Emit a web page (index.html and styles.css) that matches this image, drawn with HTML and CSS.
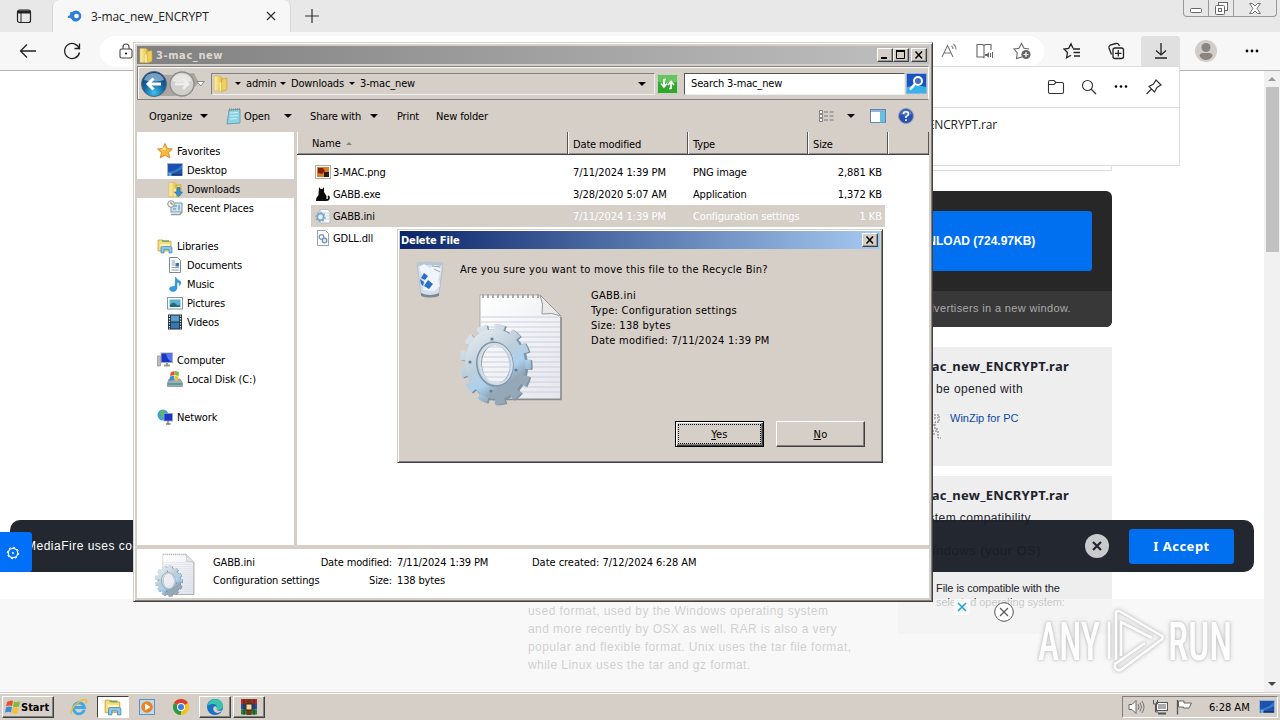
FILE: index.html
```html
<!DOCTYPE html>
<html lang="en">
<head>
    <meta charset="UTF-8">
    <title>3-mac_new_ENCRYPT</title>
    <link rel="stylesheet" href="styles.css">
</head>
<body>

<!-- Shared icons -->
<svg class="defs" width="0" height="0">
    <defs>
        <linearGradient id="gearFill" x1="0" y1="0" x2="0.4" y2="1">
            <stop offset="0" stop-color="#dfe6ec"/>
            <stop offset="0.5" stop-color="#bccedb"/>
            <stop offset="0.8" stop-color="#abd0ee"/>
            <stop offset="1" stop-color="#94a8b8"/>
        </linearGradient>
        <linearGradient id="paperFill" x1="0" y1="0" x2="1" y2="1">
            <stop offset="0" stop-color="#fff"/>
            <stop offset="1" stop-color="#e3e6ec"/>
        </linearGradient>
        <linearGradient id="folderFill" x1="0" y1="0" x2="1" y2="0">
            <stop offset="0" stop-color="#fdf3b0"/>
            <stop offset="1" stop-color="#e2b73c"/>
        </linearGradient>
        <radialGradient id="backFill" cx="0.5" cy="0.85" r="0.8">
            <stop offset="0" stop-color="#3fc3ee"/>
            <stop offset="0.5" stop-color="#1667a5"/>
            <stop offset="1" stop-color="#0c3f73"/>
        </radialGradient>
        <symbol id="ini" viewBox="0 0 104 114" overflow="visible">
            <path d="M20 3H80L101 24V107H20Z" fill="url(#paperFill)" stroke="#b0b0b0" stroke-width="1"/>
            <path d="M101 25V107.500H21" fill="none" stroke="#8a8a8a" stroke-width="1.500"/>
            <path d="M21 25H100M21 30H100M21 35H100M21 40H100M21 45H100M21 50H100M21 55H100M21 60H100M21 65H100M21 70H100M21 75H100M21 80H100M21 85H100M21 90H100M21 95H100M21 100H100" stroke="#ccd0dc" stroke-width="1"/>
            <path d="M22 4H80" stroke="#a9a9a9" stroke-width="4" stroke-dasharray="2 3"/>
            <path d="M80 3Q84 12 82 22Q92 20 101 24Z" fill="#e8e8e8" stroke="#999"/>
            <g transform="rotate(-8 36 73)">
                <ellipse cx="37" cy="73" rx="29" ry="34" fill="none" stroke="#7d92a5" stroke-width="13" pathLength="26" stroke-dasharray="1.15 0.85"/>
                <ellipse cx="37" cy="73" rx="23" ry="28" fill="none" stroke="#7d92a5" stroke-width="16"/>
                <ellipse cx="35.500" cy="72" rx="29" ry="34" fill="none" stroke="url(#gearFill)" stroke-width="13" pathLength="26" stroke-dasharray="1.15 0.85"/>
                <ellipse cx="35.500" cy="72" rx="22" ry="27" fill="none" stroke="url(#gearFill)" stroke-width="16"/>
                <ellipse cx="35" cy="72" rx="18" ry="22" fill="none" stroke="#7e93a6" stroke-width="1.500"/>
                <ellipse cx="36" cy="72" rx="16" ry="20" fill="none" stroke="#d5dde4" stroke-width="2"/>
            </g>
            <g fill="#5d7f9b">
                <circle cx="32" cy="47" r="1.600"/><circle cx="10" cy="70" r="1.600"/>
                <circle cx="56" cy="78" r="1.600"/><circle cx="31" cy="99" r="1.600"/>
            </g>
        </symbol>
        <symbol id="folder" viewBox="0 0 16 16">
            <path d="M2 1H8L10 3V15H2Z" fill="url(#folderFill)" stroke="#d9b44a" stroke-width=".6"/>
            <path d="M9 4L14 3V14L9 15.5Z" fill="#f0cf5d" stroke="#c79b2a" stroke-width=".6"/>
            <path d="M8 7V15" stroke="#fff3a8" stroke-width="1.5"/>
        </symbol>
        <symbol id="library" viewBox="0 0 16 16">
            <path d="M1 2H6L7 3.500H14V13H1Z" fill="#f5dd7d" stroke="#c9a13c" stroke-width=".8"/>
            <path d="M5 3H12" stroke="#69a85b" stroke-width="1.500"/>
            <path d="M3 7H13" stroke="#fff3b9" stroke-width="2"/>
            <path d="M4 15V10Q4 8.500 5.500 8.500H13.500Q15 8.500 15 10V15H12V11.500H7V15Z" fill="#8cc7ea" stroke="#3e86b8" stroke-width=".7"/>
        </symbol>
        <symbol id="monitor" viewBox="0 0 16 14">
            <rect x=".5" y=".5" width="15" height="12" fill="#1c52ab" stroke="#9eb4cc"/>
            <path d="M1 9Q8 9 15 2V6Q9 10 1 11Z" fill="#3a76cc"/>
            <path d="M1 12H15" stroke="#143162" stroke-width="1.500"/>
            <rect x="1.500" y="10" width="3" height="3" fill="#63b2dd"/>
        </symbol>
    </defs>
</svg>

<div class="desktop">

    <!-- Browser -->
    <div class="tabstrip">
        <svg class="tab-menu" width="16" height="16" viewBox="0 0 16 16"><rect x="1.500" y="2" width="13" height="12.500" rx="2" fill="none" stroke="#222" stroke-width="1.200"/><path d="M2 4H14" stroke="#222" stroke-width="3"/><path d="M5 5V14" stroke="#222"/></svg>
        <div class="tab">
            <svg width="18" height="16" viewBox="0 0 18 16"><path d="M1 9.500Q4 8 5 5Q7 2.500 10 2.500A5.500 5.500 0 1 1 6 12Q6 10 1 9.500Z" fill="#2d80d8"/><path d="M2 8.500H7M4 5H8" stroke="#2d80d8" stroke-width="1.500"/><circle cx="10.500" cy="8" r="2.300" fill="#fff"/></svg>
            <span class="tab-title">3-mac_new_ENCRYPT</span>
            <svg width="10" height="10" viewBox="0 0 10 10"><path d="M1 1L9 9M9 1L1 9" stroke="#333" stroke-width="1.300"/></svg>
        </div>
        <svg class="tab-new" width="16" height="16" viewBox="0 0 16 16"><path d="M8 1V15M1 8H15" stroke="#333" stroke-width="1.200"/></svg>
        <div class="caption">
            <span><svg width="13" height="5" viewBox="0 0 13 5"><rect x=".5" y=".5" width="11" height="4" rx="1" fill="#fff" stroke="#666"/></svg></span>
            <span><svg width="13" height="13" viewBox="0 0 13 13"><rect x="3.500" y=".5" width="9" height="8" fill="#fff" stroke="#666"/><rect x=".5" y="3.500" width="9" height="9" rx="1" fill="#fff" stroke="#666"/><rect x="3.500" y="6.500" width="3" height="3" fill="none" stroke="#666"/></svg></span>
            <span class="wide"><svg width="12" height="11" viewBox="0 0 12 11"><path d="M.5.5H3.500L6 3L8.500.5H11.500L8 5.500L11.500 10.500H8.500L6 8L3.500 10.500H.5L4 5.500Z" fill="#fff" stroke="#666" stroke-width=".9"/></svg></span>
        </div>
    </div>

    <div class="toolbar">
        <svg class="nav-back" width="18" height="16" viewBox="0 0 18 16"><path d="M17 8H1.500M8 1.500L1.500 8L8 14.500" fill="none" stroke="#222" stroke-width="1.300"/></svg>
        <svg class="nav-reload" width="18" height="18" viewBox="0 0 18 18"><path d="M16.500 7.500A7.500 7.500 0 1 0 16.500 10.500M16.500 1.500V6.500H11.500" fill="none" stroke="#222" stroke-width="1.300"/></svg>
        <div class="address">
            <svg width="14" height="16" viewBox="0 0 14 16"><rect x="1" y="6" width="12" height="9" rx="1.500" fill="none" stroke="#444" stroke-width="1.100"/><path d="M4 6V4A3 3 0 0 1 10 4V6" fill="none" stroke="#444" stroke-width="1.100"/><circle cx="7" cy="10.500" r="1"/></svg>
            <div class="address-tools">
                <svg width="18" height="18" viewBox="0 0 18 18"><path d="M2 15L7.500 3.500L13 15M4 11H11M11.500 4Q13 5 13 7M13.500 2Q16 4 16 7.500" fill="none" stroke="#777" stroke-width="1.100"/></svg>
                <svg width="20" height="18" viewBox="0 0 20 18"><path d="M9 3.500L7.500 2.500H2V15H8L9.500 16M9 3.500V15M9 3.500L10.500 2.500H16V8" fill="none" stroke="#666" stroke-width="1.100"/><path d="M10 12H12L14 10V16L12 14H10Z" fill="#666"/><path d="M15.500 11V15M17.500 10V16" stroke="#666"/></svg>
                <svg width="20" height="18" viewBox="0 0 20 18"><path d="M10 15L4.500 16.500L5.300 11L2 7L7 6.300L9.500 1.500L12 6.300L17 7" fill="none" stroke="#666" stroke-width="1.100"/><circle cx="14" cy="12.500" r="4.600" fill="#666"/><path d="M14 10V15M11.500 12.500H16.500" stroke="#fff" stroke-width="1.200"/></svg>
            </div>
        </div>
        <div class="toolbar-buttons">
            <span><svg width="18" height="18" viewBox="0 0 18 18"><path d="M10 6.200L8 1.800L5.700 6.300L1 7L4.500 10.500L3.600 15.800L8 13.200M10 7H17M10.500 10.500H17M11 14H17" fill="none" stroke="#222" stroke-width="1.300"/></svg></span>
            <span><svg width="18" height="18" viewBox="0 0 18 18"><rect x="6" y="6" width="10.500" height="10.500" rx="2" fill="none" stroke="#222" stroke-width="1.300"/><path d="M4.500 12.500L2 6Q1.500 4 3 3.200L9 1.500Q11 1 12 3L12.500 4M11.300 8V14.500M8 11.300H14.500" fill="none" stroke="#222" stroke-width="1.300"/></svg></span>
            <span class="active"><svg width="16" height="18" viewBox="0 0 16 18"><path d="M8 1V13M3 8.500L8 13L13 8.500M2 16H14" fill="none" stroke="#222" stroke-width="1.300"/></svg></span>
            <span class="avatar"><svg width="22" height="22" viewBox="0 0 22 22"><circle cx="11" cy="11" r="11" fill="#d0cdca"/><circle cx="11" cy="7.500" r="4.500" fill="#8a8581"/><path d="M4.500 16Q4.500 13 8 13H14Q17.500 13 17.500 16Q15 20 11 20T4.500 16Z" fill="#8a8581"/></svg></span>
            <span><svg width="16" height="4" viewBox="0 0 16 4"><circle cx="4" cy="2" r="1.400"/><circle cx="9" cy="2" r="1.400"/><circle cx="14" cy="2" r="1.400"/></svg></span>
        </div>
    </div>

    <div class="page">
        <div class="content">
            <div class="article">used format, used by the Windows operating system<br>and more recently by OSX as well. RAR is also a very<br>popular and flexible format. Unix uses the tar file format,<br>while Linux uses the tar and gz format.</div>
            <div class="side">
                <div class="ad-slot"></div>
                <div class="download-box">
                    <div class="download-btn">DOWNLOAD (724.97KB)</div>
                    <div class="download-note">advertisers in a new window.</div>
                </div>
                <div class="card opener">
                    <h3>3-mac_new_ENCRYPT.rar</h3>
                    <p class="sub">Can be opened with</p>
                    <div class="winzip"><svg width="12" height="26" viewBox="0 0 12 26"><path d="M1 2H9V9H5V16H8M2 18H8V25H11M4 5H8M3 12H6M3 21H6" fill="none" stroke="#777" stroke-dasharray="2 1"/></svg><span>WinZip for PC</span></div>
                </div>
                <div class="card compat">
                    <h3>3-mac_new_ENCRYPT.rar</h3>
                    <p class="sub">System compatibility</p>
                    <p class="os">Windows (your OS)</p>
                    <p class="hint">File is compatible with the<br>selected operating system:</p>
                </div>
            </div>
        </div>
        <div class="scrollbar">
            <svg width="16" height="16" viewBox="0 0 16 16"><path d="M4 10L8 6L12 10Z" fill="#999"/></svg>
            <div class="thumb"></div>
            <svg class="down" width="16" height="16" viewBox="0 0 16 16"><path d="M4 6L8 10L12 6Z" fill="#444"/></svg>
        </div>
    </div>

    <div class="flyout">
        <div class="flyout-head">
            <svg width="18" height="16" viewBox="0 0 18 16"><path d="M1.500 3Q1.500 1.500 3 1.500H7L9 3.500H15Q16.500 3.500 16.500 5V13Q16.500 14.500 15 14.500H3Q1.500 14.500 1.500 13ZM1.500 5.500H7L9 3.500" fill="none" stroke="#333" stroke-width="1.100"/></svg>
            <svg width="16" height="16" viewBox="0 0 16 16"><circle cx="6.500" cy="6.500" r="5" fill="none" stroke="#333" stroke-width="1.100"/><path d="M10 10L15 15" stroke="#333" stroke-width="1.200"/></svg>
            <svg width="16" height="16" viewBox="0 0 16 16"><circle cx="3" cy="7.500" r="1.300"/><circle cx="8" cy="7.500" r="1.300"/><circle cx="13" cy="7.500" r="1.300"/></svg>
            <svg width="18" height="18" viewBox="0 0 18 18"><path d="M11 2L16 7L12 9.500L9.500 14L4 8.500L8.500 6ZM6.500 11L1.500 16" fill="none" stroke="#333" stroke-width="1.200"/></svg>
        </div>
        <div class="flyout-file">3-mac_new_ENCRYPT.rar</div>
    </div>

    <div class="bottom-ad">
        <svg width="16" height="16" viewBox="0 0 16 16"><rect width="16" height="16" fill="#fafafa"/><path d="M4 4L12 12M12 4L4 12" stroke="#1fa8cf" stroke-width="1.600"/></svg>
        <svg width="20" height="20" viewBox="0 0 20 20"><circle cx="10" cy="10" r="9.300" fill="#fff" stroke="#555" stroke-width="1"/><path d="M6 6L14 14M14 6L6 14" stroke="#555" stroke-width="1.100"/></svg>
    </div>

    <div class="cookie">
        <span class="cookie-text">MediaFire uses cookies</span>
        <svg width="24" height="24" viewBox="0 0 24 24"><circle cx="12" cy="12" r="12" fill="#c9cacc"/><path d="M8 8L16 16M16 8L8 16" stroke="#22262f" stroke-width="2.200"/></svg>
        <div class="accept">I Accept</div>
    </div>
    <div class="privacy">
        <svg width="14" height="14" viewBox="0 0 14 14"><circle cx="7" cy="7" r="4.700" fill="none" stroke="#fff" stroke-width="1.300"/><circle cx="7" cy="7" r="5.700" fill="none" stroke="#fff" stroke-width="1" pathLength="16" stroke-dasharray="1 1"/><circle cx="7" cy="7" r="1" fill="#fff"/></svg>
    </div>

    <!-- Explorer window -->
    <div class="explorer">
        <div class="titlebar inactive">
            <svg width="16" height="17"><use href="#folder"/></svg>
            <span class="title">3-mac_new</span>
            <div class="win-btns">
                <i><svg width="12" height="10" viewBox="0 0 12 10"><path d="M2 8H8" stroke="#000" stroke-width="2"/></svg></i>
                <i><svg width="12" height="10" viewBox="0 0 12 10"><path d="M1.500 1V8.500H9.500V1" fill="none" stroke="#000"/><path d="M1 1H10" stroke="#000" stroke-width="2"/></svg></i>
                <i class="gap"><svg width="12" height="10" viewBox="0 0 12 10"><path d="M2.500 1.500L9 8.500M9 1.500L2.500 8.500" stroke="#000" stroke-width="1.500"/></svg></i>
            </div>
        </div>

        <div class="navbar">
            <svg width="68" height="30" viewBox="0 0 68 30">
                <path d="M10 4Q32 8 55 4L60 14L45 27H12Z" fill="#aaa7a2"/>
                <circle cx="15" cy="15" r="12.500" fill="url(#backFill)" stroke="#54697c"/>
                <path d="M5 11Q7 4 15 4T25 11Q15 14 5 11Z" fill="#a9cde6" opacity=".65"/>
                <path d="M22 15H9M14.500 9.500L9 15L14.500 20.500" fill="none" stroke="#fff" stroke-width="3"/>
                <circle cx="43" cy="15" r="12" fill="#d1d0cd" stroke="#8c8c8c" stroke-width="1.300"/>
                <path d="M33 12Q35 5 43 5T53 12Q43 15 33 12Z" fill="#e6e6e4"/>
                <path d="M36 15H49M44 10L49 15L44 20" fill="none" stroke="#eee" stroke-width="2.500"/>
                <path d="M58 12.500H65.500L61.700 17Z" fill="#fff" stroke="#777" stroke-width=".8"/>
            </svg>
            <div class="path">
                <svg class="path-icon" width="17" height="19"><use href="#folder"/></svg>
                <b class="arr"></b><span class="p1">admin</span>
                <b class="arr"></b><span class="p2">Downloads</span>
                <b class="arr"></b><span class="p3">3-mac_new</span>
                <b class="arr big last"></b>
            </div>
            <svg class="refresh" width="21" height="20" viewBox="0 0 21 20"><rect x=".5" y=".5" width="20" height="19" rx="1" fill="#35a531" stroke="#b9dcb5"/><path d="M1 1H20V8Q10 10 1 8Z" fill="#67c45f"/><path d="M7 13V5M4 9.500L7 13L10 9.500M7 5.500H9" fill="none" stroke="#fff" stroke-width="1.700"/><path d="M14 15V8M11 11L14 7.500L17 11M14 14.500H12" fill="none" stroke="#fff" stroke-width="1.700"/></svg>
            <div class="search">Search 3-mac_new</div>
            <svg width="21" height="21" viewBox="0 0 21 21"><rect x=".5" y=".5" width="20" height="20" rx="1" fill="#1b53bd" stroke="#8fb5e8"/><path d="M1 14Q10 11 20 14V20H1Z" fill="#36b4e8"/><circle cx="12" cy="8" r="4" fill="#3f6fc7" stroke="#fff" stroke-width="2"/><path d="M9 11L4 16.500" stroke="#fff" stroke-width="2.500"/></svg>
        </div>

        <div class="commands">
            <span class="c-organize">Organize</span><b class="arr big"></b>
            <svg class="c-icon" width="16" height="18" viewBox="0 0 16 18"><path d="M3 3L14 2V16L1 17Z" fill="#8ed2e6" stroke="#5d8fa3" stroke-width=".8"/><path d="M4 6L12 5.500M4 9L12 8.500M4 12L11 11.500" stroke="#c8eef7"/><path d="M3 2.500H14" stroke="#888" stroke-width="2" stroke-dasharray="1 1"/></svg>
            <span class="c-open">Open</span><b class="arr big"></b>
            <span class="c-share">Share with</span><b class="arr big"></b>
            <span class="c-print">Print</span>
            <span class="c-new">New folder</span>
            <svg class="c-view" width="16" height="13" viewBox="0 0 16 13"><path d="M.5.5H3.500V3.500H.5ZM.5 4.500H3.500V7.500H.5ZM.5 8.500H3.500V11.500H.5Z" fill="#fff" stroke="#666" stroke-width=".8"/><path d="M5 2H15M5 6H15M5 10H15" stroke="#777" stroke-dasharray="4 1.500"/></svg>
            <b class="arr big"></b>
            <svg class="c-pane" width="16" height="15" viewBox="0 0 16 15"><rect x=".5" y=".5" width="15" height="13" fill="#fff" stroke="#5c86ad"/><rect x="10" y="2.500" width="5" height="11" fill="#69bfe0"/><path d="M1 2H15" stroke="#6f9ccc" stroke-width="1.500"/></svg>
            <svg class="c-help" width="16" height="16" viewBox="0 0 16 16"><circle cx="8" cy="8" r="7.500" fill="#2a51b0" stroke="#8f9cbd"/><path d="M2 6Q3 2 8 2T14 6Q8 9 2 6Z" fill="#4f74c8"/><path d="M5.500 6Q5.500 3.800 8 3.800T10.500 6Q10.500 7.500 8 8.500V10M8 11.300V13" fill="none" stroke="#fff" stroke-width="1.600"/></svg>
        </div>

        <div class="body">
            <div class="tree">
                <div class="node top"><svg width="16" height="16" viewBox="0 0 16 16"><path d="M8 .5L10.200 5.500L15.500 6L11.500 9.600L12.800 15L8 12L3.200 15L4.500 9.600L.5 6L5.800 5.500Z" fill="#fcb93a" stroke="#d8822a" stroke-width=".9"/><path d="M8 3L9 7L4 7Z" fill="#ffe58a"/></svg>Favorites</div>
                <div class="node"><svg width="16" height="14"><use href="#monitor"/></svg>Desktop</div>
                <div class="node selected"><svg width="16" height="17" viewBox="0 0 16 16"><use href="#folder" width="16" height="16"/><path d="M10 6H13V10.500H15.500L11.500 15L7.500 10.500H10Z" fill="#2e93e6" stroke="#1a5ea6" stroke-width=".6"/></svg>Downloads</div>
                <div class="node"><svg width="16" height="16" viewBox="0 0 16 16"><rect x="4" y="3" width="11" height="9" fill="#cde4f2" stroke="#8296a5"/><path d="M6 6H10M6 9H9M12 5V10" stroke="#4e88b0"/><circle cx="4" cy="4" r="3.300" fill="#f2f2f2" stroke="#888" stroke-width=".9"/><path d="M4 2V4H6" stroke="#666" fill="none" stroke-width=".8"/><path d="M4 14.500H13L15 12" stroke="#999" stroke-width="1.500" fill="none"/></svg>Recent Places</div>
                <div class="node blank"></div>
                <div class="node top"><svg width="16" height="16"><use href="#library"/></svg>Libraries</div>
                <div class="node"><svg width="16" height="16" viewBox="0 0 16 16"><path d="M2.500.5H10.500L13.500 3.500V15.500H2.500Z" fill="#fff" stroke="#7a8a99"/><path d="M4.500 4H8M4.500 6H8M4.500 8H8M4.500 10.500H12M4.500 13H12" stroke="#8ba0b5"/><rect x="8.500" y="6" width="3.500" height="3.500" fill="#3973b5"/></svg>Documents</div>
                <div class="node"><svg width="16" height="16" viewBox="0 0 16 16"><path d="M8.500 1Q10 4 13 5Q15 7 12.500 9.500Q13 6.500 10 6V12Q9.500 15.500 6 15.500Q2.500 15 2.500 12.500Q3 10 8 10.500Z" fill="#329de2" stroke="#2078ba" stroke-width=".5"/></svg>Music</div>
                <div class="node"><svg width="16" height="14" viewBox="0 0 16 14"><rect x=".5" y="1.500" width="15" height="11.500" fill="#fff" stroke="#8296a5"/><rect x="2.500" y="3.500" width="11" height="7.500" fill="#5ab1d2"/><path d="M3 9Q6 5 9 8T13 8V11H3Z" fill="#226a78"/></svg>Pictures</div>
                <div class="node"><svg width="16" height="16" viewBox="0 0 16 16"><rect x="1" y=".5" width="14" height="15" fill="#1c2b38"/><rect x="4" y="1.500" width="8" height="6" fill="#5b9cd0"/><rect x="4" y="8.500" width="8" height="6" fill="#3579b3"/><path d="M2.500 1.500V15M13.500 1.500V15" stroke="#fff" stroke-width="1.300" stroke-dasharray="1.300 1.300"/></svg>Videos</div>
                <div class="node blank"></div>
                <div class="node top"><svg width="16" height="16" viewBox="0 0 16 16"><rect x=".5" y="4" width="3" height="10" fill="#b9bdc2" stroke="#82878c" stroke-width=".6"/><rect x="4" y="1" width="11.500" height="9.500" fill="#1b35c9" stroke="#a8abb5"/><path d="M9 1.500H15V10Q10 8 9 1.500Z" fill="#5678ea"/><path d="M7 13.500H13M10 11V13" stroke="#999" stroke-width="2"/></svg>Computer</div>
                <div class="node"><svg width="16" height="16" viewBox="0 0 16 16"><path d="M2 8H13L15.500 12V15.500H.5V12Z" fill="#a5aaae" stroke="#777" stroke-width=".6"/><path d="M1 13H15" stroke="#28a0a0" stroke-width="1.500"/><path d="M4 1L7.500 0V4L3 5Z" fill="#e6512c"/><path d="M8 0L12 1L11.500 5L7.500 4Z" fill="#7fb93a"/><path d="M3 5.500L7.300 4.500L7 9L2.500 10Z" fill="#398bdb"/><path d="M7.800 4.800L11.500 5.500L11 10L7.300 9Z" fill="#f5c12c"/></svg>Local Disk (C:)</div>
                <div class="node blank"></div>
                <div class="node top"><svg width="16" height="16" viewBox="0 0 16 16"><circle cx="6" cy="6" r="5.500" fill="#3ea3d1"/><path d="M2 3Q5 5 4 9Q8 9 7 1Z" fill="#61b863"/><rect x="7" y="4.500" width="8.500" height="7.500" fill="#1b35c9" stroke="#9aa2bb" stroke-width=".8"/><path d="M11 12V15M9 15H13.500" stroke="#777" stroke-width="1.300"/></svg>Network</div>
            </div>
            <div class="files">
                <div class="columns">
                    <span class="col-name">Name<svg width="7" height="5" viewBox="0 0 7 5"><path d="M0 4H6L3 1Z" fill="#8a8680"/></svg></span>
                    <span class="col-date">Date modified</span>
                    <span class="col-type">Type</span>
                    <span class="col-size">Size</span>
                    <span class="col-rest"></span>
                </div>
                <div class="file"><span class="f-name"><svg width="16" height="16" viewBox="0 0 16 16"><rect x=".5" y="1.500" width="15" height="13" fill="#fff" stroke="#aaa"/><rect x="2" y="3" width="12" height="10" fill="#d98224"/><path d="M3 4H8L10 7L7 10L3 9Z" fill="#8c1d12"/><rect x="9" y="8" width="5" height="5" fill="#2c1d18"/></svg>3-MAC.png</span><span class="f-date">7/11/2024 1:39 PM</span><span class="f-type">PNG image</span><span class="f-size">2,881 KB</span></div>
                <div class="file"><span class="f-name"><svg width="16" height="16" viewBox="0 0 16 16"><path d="M4 1L5.500 3H7.500L9 1V6L11.500 10V13Q13 13.500 13 11.500Q12 9.500 14 9.500Q15.500 11 14.500 13.500Q13.500 15 11 15H1Q.5 12 3.500 9Z" fill="#0c0c0c"/></svg>GABB.exe</span><span class="f-date">3/28/2020 5:07 AM</span><span class="f-type">Application</span><span class="f-size">1,372 KB</span></div>
                <div class="file active"><span class="f-name"><svg width="16" height="16" viewBox="0 0 16 16"><path d="M5 1.500H13L15 4V15H5Z" fill="#f7f9fb" stroke="#a6b4c2" stroke-width=".8"/><path d="M7 5H14M7 8H14M7 11H14" stroke="#c3ccd8" stroke-width=".8"/><circle cx="5.500" cy="9" r="3.200" fill="#e3eef7" stroke="#7ca5cb" stroke-width="1.600"/><circle cx="5.500" cy="9" r="4.500" fill="none" stroke="#7ca5cb" stroke-width="1.300" pathLength="16" stroke-dasharray="1 1"/></svg>GABB.ini</span><span class="f-date">7/11/2024 1:39 PM</span><span class="f-type">Configuration settings</span><span class="f-size">1 KB</span></div>
                <div class="file"><span class="f-name"><svg width="16" height="16" viewBox="0 0 16 16"><path d="M2.500.5H10.500L13.500 3.500V15.500H2.500Z" fill="#fff" stroke="#95a3b1"/><circle cx="6.500" cy="7" r="2.300" fill="none" stroke="#7593ae" stroke-width="1.300"/><circle cx="9.500" cy="10.500" r="2.300" fill="#dfe9f2" stroke="#7593ae" stroke-width="1.300"/></svg>GDLL.dll</span></div>
            </div>
        </div>

        <div class="details">
            <svg width="42" height="44"><use href="#ini"/></svg>
            <div class="d-name"><p>GABB.ini</p><p>Configuration settings</p></div>
            <div class="d-keys"><p>Date modified:</p><p>Size:</p></div>
            <div class="d-vals"><p>7/11/2024 1:39 PM</p><p>138 bytes</p></div>
            <div class="d-created"><p>Date created: 7/12/2024 6:28 AM</p></div>
        </div>
    </div>

    <!-- Delete dialog -->
    <div class="dialog">
        <div class="titlebar">
            <span class="title">Delete File</span>
            <div class="win-btns"><i><svg width="12" height="10" viewBox="0 0 12 10"><path d="M2.500 1.500L9 8.500M9 1.500L2.500 8.500" stroke="#000" stroke-width="1.500"/></svg></i></div>
        </div>
        <div class="dialog-main">
            <svg class="bin" width="28" height="38" viewBox="0 0 28 38"><path d="M1 3L5 34Q14 39 23 34L27 3Z" fill="#d3e1ee" stroke="#a9b9c8" stroke-width=".8"/><path d="M1 3Q14 0 27 3L26 6Q14 4 2 6Z" fill="#b9c6d2"/><path d="M3 7L8 4L14 8L19 5L25 9L22 20L24 26L18 31L7 30L9 22Z" fill="#f4f8fc" opacity=".85"/><path d="M16 6L24 7M18 9L24 12" stroke="#98a8b6"/><path d="M8 13L12 16L9 20L5 18ZM12 20L17 24L13 29L8 26ZM4 19L8 22L7 26L5 24Z" fill="#2d6ec5"/><path d="M5 33Q14 37 23 33V36Q14 39 5 36Z" fill="#7d8791"/></svg>
            <div class="dialog-content">
                <p class="question">Are you sure you want to move this file to the Recycle Bin?</p>
                <div class="dialog-file">
                    <svg width="104" height="114"><use href="#ini"/></svg>
                    <div class="dialog-info">GABB.ini<br>Type: Configuration settings<br>Size: 138 bytes<br>Date modified: 7/11/2024 1:39 PM</div>
                </div>
            </div>
        </div>
        <div class="dialog-btns">
            <div class="btn default"><span><u>Y</u>es</span></div>
            <div class="btn"><span><u>N</u>o</span></div>
        </div>
    </div>

    <!-- Watermark -->
    <svg class="watermark" width="220" height="70" viewBox="0 0 220 70">
        <g fill="#fff">
            <text x="8" y="54" textLength="62" lengthAdjust="spacingAndGlyphs">ANY</text>
            <text x="138" y="54" textLength="64" lengthAdjust="spacingAndGlyphs">RUN</text>
        </g>
        <path d="M79 16V53M86 54V6Q88 4 91 6L132 30Q134 32 131 34L92 63Q88 66 85 62V58L115 37M91 50V16L122 32" fill="none" stroke="#fff" stroke-width="2.600" stroke-linejoin="round"/>
    </svg>
</div>

<div class="taskbar">
    <div class="start">
        <svg width="16" height="16" viewBox="0 0 16 16"><path d="M2 3Q5 .5 8 2L7 7Q4 6 1 7.500Z" fill="#e6512c"/><path d="M9 2.500Q12 4 15 2L14 7.500Q11 9 8 7.500Z" fill="#7fb93a"/><path d="M1 8.500Q4 7 7 8L6 13.500Q3 12 0 14Z" fill="#398bdb"/><path d="M8 8.500Q11 10 14 8.500L12.500 14Q10 15.500 6.800 13.500Z" fill="#f5c12c"/></svg>
        <span>Start</span>
    </div>
    <div class="task flat"><svg width="18" height="18" viewBox="0 0 18 18"><path d="M14.300 12A5.500 5.500 0 1 1 14.500 9.500H5" fill="none" stroke="#3fa9e5" stroke-width="2.800"/><path d="M1.500 16Q-1 12 7 5.500T16.500 2.500Q17 4 15.500 6" fill="none" stroke="#eebf35" stroke-width="1.500"/></svg></div>
    <div class="task pressed"><svg width="18" height="18"><use href="#library"/></svg></div>
    <div class="task flat"><svg width="16" height="16" viewBox="0 0 16 16"><rect x=".5" y=".5" width="15" height="15" fill="#bcdcf2" stroke="#5a93c6"/><circle cx="8" cy="8" r="5.800" fill="#ee8220"/><path d="M6 4.500L11.500 8L6 11.500Z" fill="#fff"/></svg></div>
    <div class="task flat"><svg width="16" height="16" viewBox="0 0 16 16"><circle cx="8" cy="8" r="8" fill="#f4c21b"/><path d="M8 8L1.070 4A8 8 0 0 1 14.930 4Z" fill="#df3d2e"/><path d="M8 8L1.070 4A8 8 0 0 0 8 16Z" fill="#299a4c"/><circle cx="8" cy="8" r="4" fill="#fff"/><circle cx="8" cy="8" r="3" fill="#3b7de0"/></svg></div>
    <div class="task raised"><svg width="16" height="16" viewBox="0 0 16 16"><circle cx="8" cy="8" r="8" fill="#1771c4"/><path d="M.5 7Q2 0 8.500 0T16 7Q15.500 11 11 11Q9 11 10 9Q10 5 6 5Q2 5 .5 7Z" fill="#38c4b0"/><path d="M10 9Q9 11 11 11.500Q14 12 15.500 11Q13 14.500 10 14Q5 12 6.500 8Q9 6 10 9Z" fill="#d6cfc8"/></svg></div>
    <div class="task raised"><svg width="16" height="16" viewBox="0 0 16 16"><rect y="0" width="16" height="5" fill="#b22d2a"/><rect y="5" width="16" height="5.500" fill="#2d4fa3"/><rect y="10.500" width="16" height="5" fill="#2c8138"/><rect x="5.500" width="5" height="16" fill="#6d3b1b"/><rect x="5" y="5" width="6" height="6" fill="#f0dc9c" stroke="#392412"/><path d="M3 0V16M13 0V16" stroke="#222" stroke-width=".8"/></svg></div>
    <div class="tray">
        <svg width="17" height="16" viewBox="0 0 17 16"><path d="M1 5.500H4L8 1.500V14.500L4 10.500H1Z" fill="#fff" stroke="#666"/><path d="M10 5Q12 8 10 11M12 3.500Q15 8 12 12.500M14 2Q18 8 14 14" fill="none" stroke="#777"/></svg>
        <svg width="17" height="16" viewBox="0 0 17 16"><rect x="4.500" y="3.500" width="11" height="8" fill="#aaa" stroke="#555"/><path d="M5.500 4.500H14.500V10.500H5.500Z" fill="none" stroke="#fff"/><path d="M6 14.500H14" stroke="#555" stroke-width="2"/><path d="M1.500 1V5H5.500V1M3.500 5V13H6" fill="none" stroke="#555"/></svg>
        <svg width="17" height="16" viewBox="0 0 17 16"><path d="M1.500 1V15.500" stroke="#555" stroke-width="1.300"/><path d="M2.500 2H8V4H15.500L13 9H7.500V8H2.500Z" fill="#fff" stroke="#666"/></svg>
        <span class="clock">6:28 AM</span>
        <svg width="16" height="14"><use href="#monitor"/></svg>
    </div>
</div>

</body>
</html>
```
FILE: styles.css
```css
* {
    box-sizing: border-box;
}

body {
    margin: 0;
    width: 1280px;
    height: 720px;
    overflow: hidden;
    background: #fff;
    color: #000;
    font-family: "DejaVu Sans Condensed", "DejaVu Sans", sans-serif;
    font-stretch: condensed;
    font-size: 11px;
    letter-spacing: -0.15px;
}

p, h3 {
    margin: 0;
}

svg {
    display: block;
    flex: none;
}

.defs {
    position: absolute;
}

.desktop {
    position: relative;
    height: 692px;
    overflow: hidden;
}

/* Browser */
.tabstrip {
    display: flex;
    align-items: center;
    height: 32px;
    background: #e8e8e8;
}

.tab-menu {
    margin-left: 16px;
}

.tab {
    display: flex;
    align-items: center;
    width: 239px;
    height: 32px;
    margin-left: 20px;
    padding: 0 14px 0 13px;
    background: #f7f7f7;
    border: 1px solid #d8d8d8;
    border-width: 0 1px;
    border-radius: 7px 7px 0 0;
}

.tab-title {
    flex: 1;
    margin-left: 7px;
    color: #222;
    font-family: "Open Sans", sans-serif;
    font-size: 12px;
    font-stretch: normal;
    letter-spacing: -0.1px;
}

.tab-new {
    margin-left: 13px;
}

.caption {
    display: flex;
    align-self: flex-start;
    height: 17px;
    margin-left: auto;
    margin-right: 3px;
    border: 1px solid #999;
    border-top: 0;
    border-radius: 0 0 4px 4px;
}

.caption span {
    display: flex;
    justify-content: center;
    align-items: center;
    width: 25px;
    border-right: 1px solid #999;
}

.caption span:first-child {
    padding-top: 4px;
}

.caption .wide {
    width: 42px;
    border-right: 0;
}

.toolbar {
    display: flex;
    align-items: center;
    height: 39px;
    background: #f7f7f7;
    border-bottom: 1px solid #b4b4b4;
}

.nav-back {
    margin-left: 19px;
}

.nav-reload {
    margin-left: 26px;
}

.address {
    display: flex;
    align-items: center;
    justify-content: space-between;
    width: 944px;
    height: 31px;
    margin-left: 19px;
    padding: 0 12px 0 19px;
    background: #fff;
    border-radius: 16px;
}

.address-tools {
    display: flex;
    gap: 17px;
}

.toolbar-buttons {
    display: flex;
    align-items: center;
    margin-left: 6px;
}

.toolbar-buttons span {
    display: flex;
    justify-content: center;
    align-items: center;
    width: 44px;
    height: 31px;
}

.toolbar-buttons .active {
    width: 39px;
    margin: 0 3px;
    background: #e0e0e0;
    border-radius: 3px;
}

.toolbar-buttons .avatar {
    width: 46px;
}

.page {
    display: flex;
    height: 621px;
    font-family: "Liberation Sans", sans-serif;
    font-stretch: normal;
    letter-spacing: 0;
}

.content {
    display: flex;
    flex: 1;
}

.article {
    width: 360px;
    margin: 531px 0 0 528px;
    font-size: 12px;
    line-height: 18px;
    color: #444;
    letter-spacing: 0.44px;
    white-space: nowrap;
}

.side {
    width: 214px;
    margin-left: 10px;
    color: #22222c;
}

.ad-slot {
    height: 100px;
    border: 1px solid #ddd;
}

.download-box {
    height: 136px;
    margin-top: 20px;
    padding-top: 20px;
    background: #272727;
    border-radius: 6px;
    overflow: hidden;
}

.download-btn {
    height: 60px;
    margin-right: 20px;
    padding-right: 59px;
    background: #0070f0;
    border-radius: 3px;
    color: #fff;
    font-size: 12px;
    font-weight: bold;
    line-height: 60px;
    text-align: right;
    white-space: nowrap;
}

.download-note {
    height: 36px;
    margin-top: 20px;
    padding-right: 41px;
    background: #383838;
    color: #aaa;
    font-size: 11px;
    line-height: 35px;
    letter-spacing: 0.35px;
    text-align: right;
}

.card {
    height: 119px;
    margin-top: 20px;
    padding: 10px 43px 0 0;
    background: #eee;
    text-align: right;
    white-space: nowrap;
}

.card h3 {
    font-family: "Noto Sans", sans-serif;
    font-size: 13px;
    line-height: 18px;
    letter-spacing: 0.25px;
}

.card .sub {
    margin-top: 5px;
    padding-right: 46px;
    font-size: 12px;
    line-height: 18px;
    letter-spacing: 0.4px;
}

.compat {
    height: 158px;
    margin-top: 10px;
}

.compat .sub {
    padding-right: 38px;
}

.compat .os {
    margin-top: 15px;
    padding-right: 28px;
    font-size: 13px;
    line-height: 18px;
    letter-spacing: 0.5px;
}

.compat .hint {
    margin: 21px 0 0 38px;
    font-size: 11px;
    line-height: 14px;
    letter-spacing: -0.08px;
    text-align: left;
}

.winzip {
    display: flex;
    margin: 11px 0 0 32px;
    color: #0d47a1;
}

.winzip svg {
    margin-top: 4px;
}

.winzip span {
    margin-left: 8px;
    line-height: 18px;
}

.scrollbar {
    display: flex;
    flex-direction: column;
    align-items: center;
    width: 16px;
    background: #f1f1f1;
}

.scrollbar .thumb {
    width: 13px;
    height: 165px;
    background: #c1c1c1;
}

.scrollbar .down {
    margin-top: auto;
}

.flyout {
    position: absolute;
    left: 860px;
    top: 66px;
    width: 320px;
    height: 100px;
    background: #fff;
    border: 1px solid #ddd;
    font-family: "Open Sans", sans-serif;
    font-size: 12px;
    font-stretch: normal;
}

.flyout-head {
    display: flex;
    align-items: center;
    justify-content: flex-end;
    gap: 16px;
    height: 41px;
    padding-right: 16px;
    border-bottom: 1px solid #ddd;
}

.flyout-file {
    padding: 8px 182px 0 0;
    line-height: 18px;
    color: #222;
    text-align: right;
    white-space: nowrap;
}

.bottom-ad {
    position: absolute;
    left: 0;
    top: 599px;
    display: flex;
    gap: 24px;
    width: 1264px;
    height: 93px;
    padding-left: 954px;
    background: rgba(246, 246, 246, 0.78);
}

.bottom-ad svg + svg {
    margin-top: 3px;
}

.cookie {
    position: absolute;
    left: 10px;
    top: 520px;
    display: flex;
    align-items: center;
    width: 1244px;
    height: 52px;
    padding: 0 20px 0 16px;
    background: rgba(26, 30, 39, 0.96);
    border-radius: 10px;
    color: #fff;
    font-family: "Liberation Sans", sans-serif;
    font-stretch: normal;
}

.cookie-text {
    margin-right: auto;
    font-size: 12px;
    letter-spacing: 0.5px;
}

.accept {
    width: 105px;
    height: 35px;
    margin-left: 20px;
    background: #0070f0;
    border-radius: 3px;
    font-family: "Noto Sans", sans-serif;
    font-size: 13px;
    font-weight: bold;
    line-height: 35px;
    letter-spacing: 0.5px;
    text-align: center;
}

.privacy {
    position: absolute;
    left: 0;
    top: 532px;
    display: flex;
    align-items: center;
    width: 32px;
    height: 40px;
    padding: 2px 0 0 6px;
    background: #0070f8;
    border-radius: 0 3px 3px 0;
}

/* Classic windows */
.explorer, .dialog {
    position: absolute;
    display: flex;
    flex-direction: column;
    background: #d6cfc8;
    border: 1px solid #d4d0c8;
    border-right-color: #404040;
    border-bottom-color: #404040;
    box-shadow: inset 1px 1px #fff, inset -1px -1px #808080;
}

.explorer {
    left: 133px;
    top: 42px;
    width: 800px;
    height: 560px;
    padding: 3px;
}

.titlebar {
    display: flex;
    align-items: center;
    height: 18px;
    padding: 0 2px 0 1px;
    background: linear-gradient(to right, #0a246a, #a6caf0);
    color: #fff;
    font-weight: bold;
}

.titlebar.inactive {
    background: linear-gradient(to right, #808080, #c0c0c0);
    color: #dcd8d0;
}

.inactive .title {
    margin-left: 2px;
    letter-spacing: 0.6px;
}

.win-btns {
    display: flex;
    margin-left: auto;
}

.win-btns i {
    display: flex;
    align-items: center;
    justify-content: center;
    width: 16px;
    height: 14px;
    background: #d6cfc8;
    border: 1px solid #fff;
    border-right-color: #404040;
    border-bottom-color: #404040;
    box-shadow: inset -1px -1px #999;
}

.win-btns .gap {
    margin-left: 2px;
}

.navbar {
    display: flex;
    align-items: center;
    height: 34px;
    margin-top: 2px;
    padding: 1px 0 0 1px;
    border: 1px solid #808080;
    border-right-color: #fff;
    border-bottom-color: #808080;
    box-shadow: inset 1px 1px #fff;
}

.path {
    display: flex;
    align-items: center;
    width: 444px;
    height: 22px;
    margin-left: 4px;
    border: 1px solid #808080;
    border-right-color: #eee;
    border-bottom-color: #eee;
    white-space: nowrap;
}

.path .path-icon {
    margin-right: 6px;
}

.arr {
    flex: none;
    width: 0;
    height: 0;
    border: 3px solid transparent;
    border-top-color: #000;
    border-bottom: 0;
}

.arr.big {
    border-width: 4px 4px 0;
}

.path span {
    margin-left: 5px;
}

.p1 {
    width: 34px;
}

.p2 {
    width: 58px;
}

.path .last {
    margin-left: auto;
    margin-right: 8px;
}

.refresh {
    margin: 0 6px 0 2px;
}

.search {
    width: 221px;
    height: 22px;
    margin-right: 1px;
    padding-left: 6px;
    background: #fff;
    border: 1px solid #555;
    border-right-color: #eee;
    border-bottom-color: #eee;
    line-height: 20px;
}

.commands {
    display: flex;
    align-items: center;
    height: 32px;
    padding-left: 12px;
    white-space: nowrap;
}

.c-organize {
    width: 51px;
}

.c-icon {
    margin: 0 2px 0 18px;
}

.c-open {
    width: 40px;
}

.c-share {
    width: 60px;
    margin-left: 18px;
}

.c-print {
    width: 39px;
    margin-left: 19px;
}

.c-view {
    margin: 0 12px 0 auto;
}

.c-pane {
    margin: 0 12px 0 15px;
}

.c-help {
    margin-right: 15px;
}

.body {
    display: flex;
    height: 413px;
    background: #fff;
}

.tree {
    flex: none;
    width: 160px;
    padding-top: 9px;
    border-right: 3px solid #d6cfc8;
    white-space: nowrap;
}

.node {
    display: flex;
    align-items: center;
    height: 19px;
    padding: 1px 0 0 30px;
}

.node.top {
    padding-left: 20px;
}

.node svg {
    margin-right: 4px;
}

.node.selected {
    background: #d6cfc8;
}

.files {
    flex: 1;
}

.columns {
    display: flex;
    height: 23px;
    margin-bottom: 6px;
    background: #d6cfc8;
    border-bottom: 1px solid #404040;
    box-shadow: inset 0 -1px #909090;
    line-height: 25px;
}

.columns span {
    width: 120px;
    padding-left: 4px;
    border-left: 1px solid #fff;
    border-right: 1px solid #555;
}

.columns .col-name {
    display: flex;
    align-items: center;
    width: 271px;
    padding: 1px 0 0 14px;
}

.col-name svg {
    margin-left: 5px;
}

.columns .col-size {
    width: 80px;
}

.columns .col-rest {
    flex: 1;
    width: auto;
}

.file {
    display: flex;
    align-items: center;
    width: 574px;
    height: 22px;
    margin-left: 14px;
    padding-left: 4px;
}

.file.active {
    background: #d6cfc8;
    color: #fff;
}

.f-name {
    display: flex;
    align-items: center;
    width: 258px;
    color: #000;
}

.f-name svg {
    margin-right: 2px;
}

.f-date, .f-type {
    width: 120px;
}

.f-date, .f-size {
    letter-spacing: -0.05px;
}

.f-size {
    width: 69px;
    text-align: right;
}

.details {
    display: flex;
    height: 53px;
    padding: 7px 0 0 17px;
    background: #fff;
    border-top: 4px solid #d6cfc8;
}

.details svg {
    margin-top: -3px;
}

.details p {
    height: 18px;
    line-height: 13px;
    white-space: nowrap;
}

.d-name {
    width: 107px;
    margin-left: 17px;
}

.d-keys {
    width: 72px;
    text-align: right;
}

.d-vals {
    width: 131px;
    margin-left: 5px;
}

.d-created {
    margin-left: 4px;
    letter-spacing: -0.03px;
}

/* Delete dialog */
.dialog {
    left: 397px;
    top: 229px;
    width: 486px;
    height: 234px;
    padding: 1px 2px 2px 2px;
}

.dialog .titlebar {
    flex: none;
}

.dialog-main {
    display: flex;
    padding: 11px 0 0 16px;
    letter-spacing: 0.26px;
}

.question {
    padding-top: 2px;
    line-height: 15px;
    white-space: nowrap;
}

.dialog-content {
    margin-left: 16px;
}

.dialog-file {
    display: flex;
    margin-top: 15px;
}

.dialog-info {
    margin: -4px 0 0 27px;
    line-height: 15px;
}

.dialog-btns {
    display: flex;
    gap: 12px;
    margin: 15px 0 0 275px;
}

.btn {
    width: 89px;
    height: 26px;
    padding: 2px;
    border: 1px solid #fff;
    border-right-color: #404040;
    border-bottom-color: #404040;
    box-shadow: inset -1px -1px #808080;
    text-align: center;
    letter-spacing: 0.2px;
}

.btn.default {
    border-color: #000;
    box-shadow: inset 1px 1px #fff, inset -1px -1px #404040, inset -2px -2px #808080;
}

.btn span {
    display: block;
    height: 20px;
    border: 1px solid transparent;
    line-height: 20px;
}

.btn.default span {
    border: 1px dotted #000;
}

.watermark {
    position: absolute;
    left: 1030px;
    top: 606px;
    overflow: visible;
    opacity: 0.85;
    font-family: Roboto, sans-serif;
    font-size: 53px;
    font-weight: 500;
    letter-spacing: 0;
    filter: drop-shadow(0 0 1px #bbb) drop-shadow(0 0 2px #c4c4c4);
}

/* Taskbar */
.taskbar {
    display: flex;
    align-items: center;
    height: 28px;
    padding-top: 1px;
    background: #d6cfc8;
    border-top: 1px solid #d4d0c8;
    box-shadow: inset 0 1px #fff;
}

.start {
    display: flex;
    align-items: center;
    width: 52px;
    height: 22px;
    margin-left: 2px;
    padding-left: 2px;
    border: 1px solid #fff;
    border-right-color: #404040;
    border-bottom-color: #404040;
    box-shadow: inset -1px -1px #808080;
    font-weight: bold;
}

.start span {
    letter-spacing: 0;
}

.task {
    display: flex;
    align-items: center;
    justify-content: center;
    width: 32px;
    height: 22px;
    margin-left: 2px;
    border: 1px solid transparent;
}

.start + .task {
    width: 36px;
    margin-left: 7px;
}

.pressed {
    margin-left: 0;
    background: #fff;
    border-color: #404040 #fff #fff #404040;
}

.raised {
    border-color: #fff #404040 #404040 #fff;
    box-shadow: inset -1px -1px #808080;
}

.tray {
    display: flex;
    align-items: center;
    width: 156px;
    height: 22px;
    margin-left: auto;
    margin-right: 2px;
    padding-left: 5px;
    border: 1px solid #808080;
    border-right-color: #fff;
    border-bottom-color: #fff;
}

.tray svg {
    margin-right: 7px;
}

.clock {
    width: 41px;
    margin: 0 9px 0 9px;
    letter-spacing: 0;
    white-space: nowrap;
}

.tray .clock + svg {
    margin-right: 0;
}
```
